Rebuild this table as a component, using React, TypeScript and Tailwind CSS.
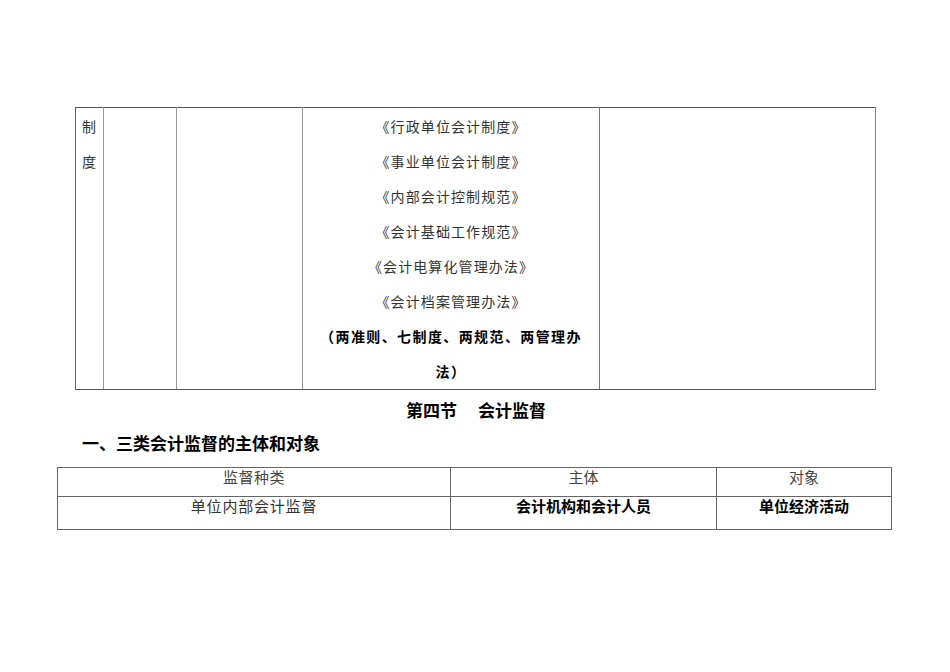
import React from "react";

const font = { fontFamily: '"Noto Sans CJK SC", "Noto Sans", sans-serif' };

export default function App() {
  const books = [
    "《行政单位会计制度》",
    "《事业单位会计制度》",
    "《内部会计控制规范》",
    "《会计基础工作规范》",
    "《会计电算化管理办法》",
    "《会计档案管理办法》",
  ];
  return (
    <div className="w-[950px] h-[672px] bg-white" style={font}>
      <div className="pt-[107px] pl-[75px]">
        <table className="table-fixed border-collapse w-[800px]">
          <colgroup>
            <col className="w-[28px]" />
            <col className="w-[73px]" />
            <col className="w-[126px]" />
            <col className="w-[297px]" />
            <col className="w-[276px]" />
          </colgroup>
          <tbody>
            <tr className="h-[282px]">
              <td className="align-top border-y border-y-[#555] border-l border-l-[#666] border-r border-r-[#999] pt-[1px] px-[6px] text-[14px] leading-[35px] text-[#333]">
                制度
              </td>
              <td className="border-y border-y-[#555] border-x border-x-[#999]"></td>
              <td className="border-y border-y-[#555] border-x border-x-[#999]"></td>
              <td className="align-top border-y border-y-[#555] border-x border-x-[#777] pt-[1px] px-[10px] text-center">
                {books.map((b) => (
                  <div key={b} className="text-[14px] leading-[35px] tracking-[1.1px] text-[#333]">
                    {b}
                  </div>
                ))}
                <div className="text-[14px] leading-[35px] tracking-[1.4px] font-bold text-black">
                  （两准则、七制度、两规范、两管理办法）
                </div>
              </td>
              <td className="border-y border-y-[#555] border-l border-l-[#999] border-r border-r-[#888]"></td>
            </tr>
          </tbody>
        </table>
      </div>
      <div className="mt-[7px] text-center text-[17px] leading-[26px] font-bold text-black pl-[2px]">
        第四节<span className="inline-block w-[21px]"></span>会计监督
      </div>
      <div className="mt-[7px] pl-[82px] text-[17px] leading-[26px] font-bold text-black">
        一、三类会计监督的主体和对象
      </div>
      <div className="pl-[57px] mt-[11px]">
        <table className="table-fixed border-collapse w-[834px] text-[15px] leading-[18px]">
          <colgroup>
            <col className="w-[393px]" />
            <col className="w-[266px]" />
            <col className="w-[175px]" />
          </colgroup>
          <tbody>
            <tr className="h-[29px]">
              <td className="align-top text-center border border-[#666] text-[#444] tracking-[0.5px]">监督种类</td>
              <td className="align-top text-center border border-[#666] text-[#444]">主体</td>
              <td className="align-top text-center border border-[#666] text-[#444]">对象</td>
            </tr>
            <tr className="h-[33px]">
              <td className="align-top text-center border border-[#666] text-[#333] tracking-[0.8px]">单位内部会计监督</td>
              <td className="align-top text-center border border-[#666] font-bold text-black">会计机构和会计人员</td>
              <td className="align-top text-center border border-[#666] font-bold text-black">单位经济活动</td>
            </tr>
          </tbody>
        </table>
      </div>
    </div>
  );
}
